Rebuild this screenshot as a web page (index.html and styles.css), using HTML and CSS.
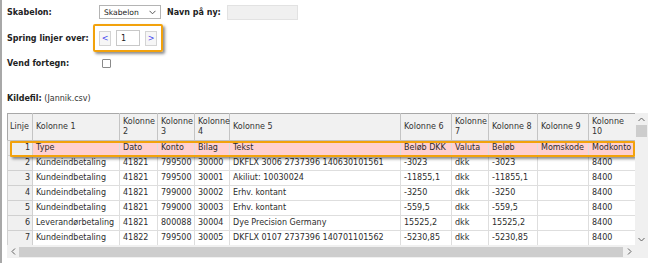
FILE: index.html
```html
<!DOCTYPE html>
<html lang="da">
<head>
    <meta charset="UTF-8">
    <title>Import</title>
    <link rel="stylesheet" href="styles.css">
</head>
<body>
    <div class="page">
        <div class="form-row first">
            <span class="label">Skabelon:</span>
            <span class="select">Skabelon
                <svg class="chevron" width="7" height="5" viewBox="0 0 7 5"><polyline points="0.5,0.8 3.5,3.8 6.5,0.8" fill="none" stroke="#555" stroke-width="1"/></svg>
            </span>
            <span class="label name-label">Navn på ny:</span>
            <span class="text-box disabled"></span>
        </div>

        <div class="form-row skip">
            <span class="label">Spring linjer over:</span>
            <span class="stepper">
                <span class="step-btn">&lt;</span>
                <span class="num-box">1</span>
                <span class="step-btn">&gt;</span>
            </span>
        </div>

        <div class="form-row invert">
            <span class="label">Vend fortegn:</span>
            <span class="check"></span>
        </div>

        <div class="form-row source">
            <span class="label-inline">Kildefil:</span>&nbsp;(Jannik.csv)
        </div>

        <div class="grid-frame">
            <div class="grid-view">
                <table class="grid">
                    <colgroup>
                        <col style="width:25px">
                        <col style="width:87px">
                        <col style="width:38px">
                        <col style="width:37px">
                        <col style="width:35px">
                        <col style="width:171px">
                        <col style="width:51px">
                        <col style="width:37px">
                        <col style="width:49px">
                        <col style="width:51px">
                        <col style="width:47px">
                    </colgroup>
                    <thead>
                        <tr>
                            <th>Linje</th><th>Kolonne 1</th><th>Kolonne 2</th><th>Kolonne 3</th><th>Kolonne 4</th><th>Kolonne 5</th><th>Kolonne 6</th><th>Kolonne 7</th><th>Kolonne 8</th><th>Kolonne 9</th><th>Kolonne 10</th>
                        </tr>
                    </thead>
                    <tbody>
                        <tr class="head-line">
                            <td class="num">1</td><td>Type</td><td>Dato</td><td>Konto</td><td>Bilag</td><td>Tekst</td><td>Beløb DKK</td><td>Valuta</td><td>Beløb</td><td>Momskode</td><td>Modkonto</td>
                        </tr>
                        <tr>
                            <td class="num">2</td><td>Kundeindbetaling</td><td>41821</td><td>799500</td><td>30000</td><td>DKFLX 3006 2737396 140630101561</td><td>-3023</td><td>dkk</td><td>-3023</td><td></td><td>8400</td>
                        </tr>
                        <tr>
                            <td class="num">3</td><td>Kundeindbetaling</td><td>41821</td><td>799500</td><td>30001</td><td>Akiliut: 10030024</td><td>-11855,1</td><td>dkk</td><td>-11855,1</td><td></td><td>8400</td>
                        </tr>
                        <tr>
                            <td class="num">4</td><td>Kundeindbetaling</td><td>41821</td><td>799000</td><td>30002</td><td>Erhv. kontant</td><td>-3250</td><td>dkk</td><td>-3250</td><td></td><td>8400</td>
                        </tr>
                        <tr>
                            <td class="num">5</td><td>Kundeindbetaling</td><td>41821</td><td>799000</td><td>30003</td><td>Erhv. kontant</td><td>-559,5</td><td>dkk</td><td>-559,5</td><td></td><td>8400</td>
                        </tr>
                        <tr>
                            <td class="num">6</td><td>Leverandørbetaling</td><td>41821</td><td>800088</td><td>30004</td><td>Dye Precision Germany</td><td>15525,2</td><td>dkk</td><td>15525,2</td><td></td><td>8400</td>
                        </tr>
                        <tr>
                            <td class="num">7</td><td>Kundeindbetaling</td><td>41822</td><td>799500</td><td>30005</td><td>DKFLX 0107 2737396 140701101562</td><td>-5230,85</td><td>dkk</td><td>-5230,85</td><td></td><td>8400</td>
                        </tr>
                    </tbody>
                </table>
                <div class="pick-mark"></div>
            </div>

            <div class="vscroll">
                <span class="arrow">
                    <svg width="7" height="5" viewBox="0 0 7 5"><polyline points="0.5,4 3.5,1 6.5,4" fill="none" stroke="#606060" stroke-width="1"/></svg>
                </span>
                <span class="v-thumb"></span>
                <span class="track"></span>
                <span class="arrow">
                    <svg width="7" height="5" viewBox="0 0 7 5"><polyline points="0.5,1 3.5,4 6.5,1" fill="none" stroke="#606060" stroke-width="1"/></svg>
                </span>
            </div>

            <div class="hscroll">
                <span class="arrow">
                    <svg width="5" height="7" viewBox="0 0 5 7"><polyline points="4,0.5 1,3.5 4,6.5" fill="none" stroke="#606060" stroke-width="1"/></svg>
                </span>
                <span class="h-thumb"></span>
                <span class="arrow">
                    <svg width="5" height="7" viewBox="0 0 5 7"><polyline points="1,0.5 4,3.5 1,6.5" fill="none" stroke="#606060" stroke-width="1"/></svg>
                </span>
            </div>
            <div class="corner"></div>
        </div>
    </div>
</body>
</html>
```

FILE: styles.css
```css
body {
    margin: 0;
    font-family: "DejaVu Sans", Verdana, sans-serif;
    font-size: 8px;
    color: #222;
    background-color: #fff;
}

.page {
    border-left: 2px solid #a8a8a8;
    padding-left: 5px;
    height: 263px;
}

.form-row {
    display: flex;
    align-items: center;
    height: 16px;
}

.form-row.first {
    padding-top: 4px;
}

.form-row.skip {
    margin-top: 4px;
    height: 28px;
}

.form-row.invert {
    margin-top: 3px;
}

.form-row.source {
    margin-top: 19px;
    color: #333;
}

.label {
    width: 86px;
    font-weight: bold;
    flex-shrink: 0;
}

.label-inline {
    font-weight: bold;
    color: #222;
}

.select {
    box-sizing: border-box;
    width: 62px;
    height: 14px;
    margin-left: 6px;
    padding: 0 4px;
    border: 1px solid #b4b4b4;
    display: flex;
    align-items: center;
    justify-content: space-between;
    font-size: 7.6px;
}

.name-label {
    width: auto;
    margin-left: 6px;
}

.text-box {
    box-sizing: border-box;
    width: 71px;
    height: 15px;
    margin-left: 6px;
    border: 1px solid #e2e2e2;
}

.text-box.disabled {
    background-color: #f0f0f0;
}

/* orange frame round the skip-lines stepper */
.stepper {
    box-sizing: border-box;
    height: 28px;
    padding: 0 4px;
    display: flex;
    align-items: center;
    gap: 5px;
    border: 2px solid #f2a20c;
    border-radius: 2px;
    box-shadow: 2px 2px 3px rgba(0, 0, 0, 0.45);
}

.step-btn {
    box-sizing: border-box;
    width: 12px;
    height: 15px;
    border: 1px solid #d4d4d4;
    background-color: #f6f6f6;
    color: #4646f0;
    display: flex;
    align-items: center;
    justify-content: center;
}

.num-box {
    box-sizing: border-box;
    width: 24px;
    height: 16px;
    border: 1px solid #c8c8c8;
    padding-left: 4px;
    display: flex;
    align-items: center;
}

.check {
    box-sizing: border-box;
    width: 9px;
    height: 9px;
    margin-left: 9px;
    border: 1px solid #8a8a8a;
    border-radius: 1px;
    background-color: #fff;
}

/* grid with fake scrollbars */
.grid-frame {
    margin-top: 7px;
    display: grid;
    grid-template-columns: 628px 13px;
    grid-template-rows: 132px 13px;
}

.grid-view {
    position: relative;
    overflow: hidden;
}

.grid {
    table-layout: fixed;
    width: 628px;
    border-collapse: collapse;
    line-height: 14px;
    color: #2c2c2c;
}

.grid th {
    background-color: #f1f1f1;
    border: 1px solid #c4c4c4;
    font-weight: normal;
    text-align: left;
    vertical-align: middle;
    line-height: 10px;
    padding: 3px 2px 3px 3px;
    color: #333;
}

.grid td {
    border: 1px solid #dedede;
    padding: 0 2px 0 3px;
    white-space: nowrap;
    overflow: hidden;
}

.grid th:first-child,
.grid td:first-child {
    border-left-color: #a8a8a8;
    padding-left: 2px;
}

.grid thead th {
    border-top-color: #a8a8a8;
}

.grid td.num {
    text-align: right;
    background-color: #f0f0f0;
    border-color: #d0d0d0;
}

.grid tr.head-line td {
    background-color: #ffd0d0;
}

.grid tr.head-line td.num {
    background-color: #eeeeee;
}

.pick-mark {
    position: absolute;
    left: 3px;
    top: 28px;
    width: 625px;
    height: 16px;
    box-sizing: border-box;
    border: 2px solid #f2a20c;
    border-radius: 1px;
    box-shadow: 2px 2px 3px rgba(0, 0, 0, 0.45);
}

.vscroll {
    display: flex;
    flex-direction: column;
    background-color: #f0f0f0;
}

.vscroll .arrow {
    height: 12px;
    display: flex;
    align-items: center;
    justify-content: center;
}

.v-thumb {
    height: 12px;
    margin: 0 1px;
    background-color: #cdcdcd;
}

.track {
    flex: 1;
}

.hscroll {
    display: flex;
    background-color: #f0f0f0;
}

.hscroll .arrow {
    width: 12px;
    display: flex;
    align-items: center;
    justify-content: center;
}

.h-thumb {
    flex: 1;
    margin: 2px 0 1px 0;
    background-color: #cdcdcd;
}

.corner {
    background-color: #f0f0f0;
}
```
